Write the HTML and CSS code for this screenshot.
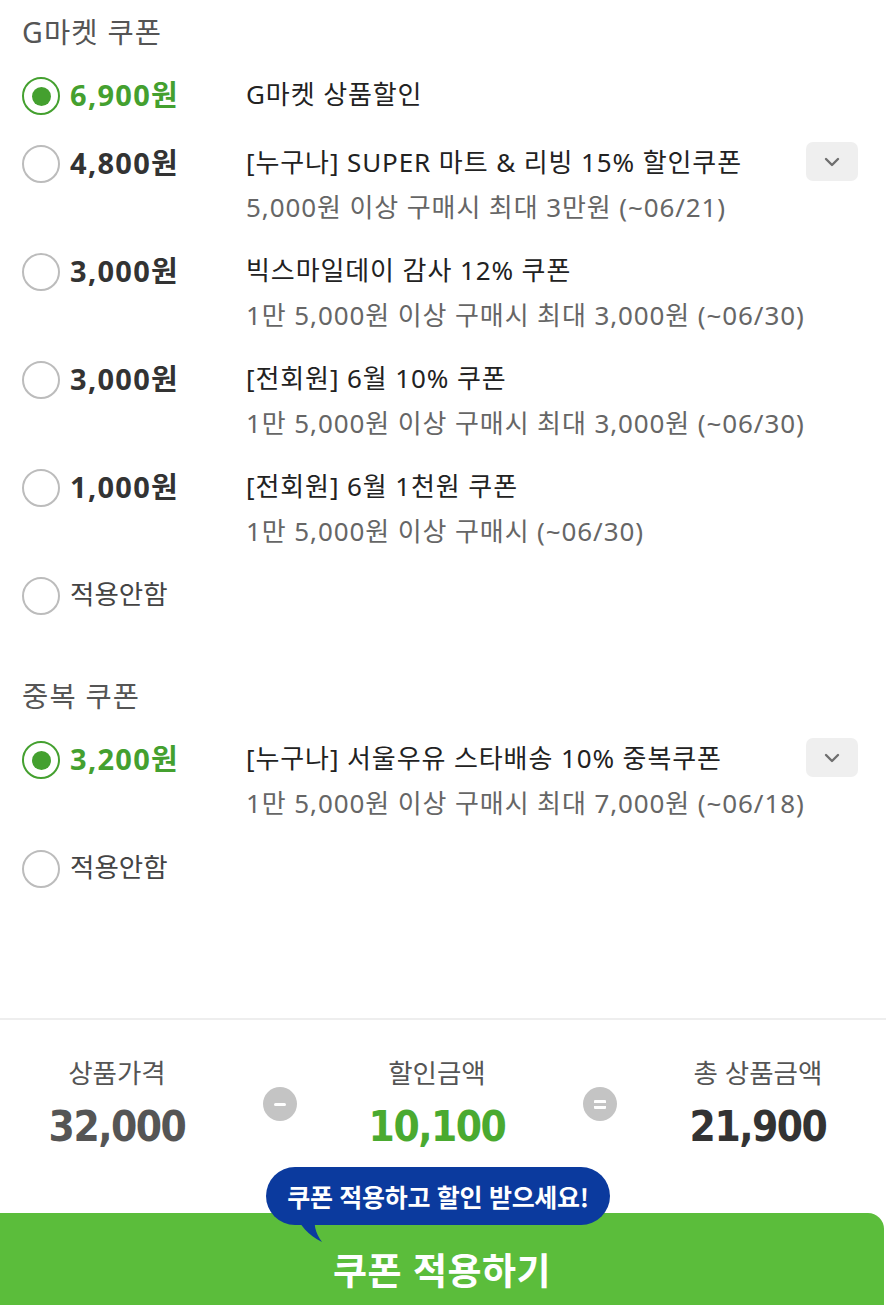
FILE: index.html
```html
<!DOCTYPE html>
<html lang="ko">
<head>
<meta charset="utf-8">
<link rel="stylesheet" href="styles.css">
</head>
<body>
<div class="page">
  <section class="section">
    <h2 class="sec-title">G마켓 쿠폰</h2>
    <div class="row first">
      <span class="radio on"></span>
      <span class="amount green">6,900원</span>
      <div class="info"><div class="title">G마켓 상품할인</div></div>
    </div>
    <div class="row">
      <span class="radio"></span>
      <span class="amount">4,800원</span>
      <div class="info"><div class="title">[누구나] SUPER 마트 &amp; 리빙 15% 할인쿠폰</div><div class="sub">5,000원 이상 구매시 최대 3만원 (~06/21)</div></div>
      <button class="more"><svg width="16" height="10" viewBox="0 0 16 10"><path d="M2 2l6 6 6-6" fill="none" stroke="#6f6f6f" stroke-width="2.4" stroke-linecap="round" stroke-linejoin="round"/></svg></button>
    </div>
    <div class="row">
      <span class="radio"></span>
      <span class="amount">3,000원</span>
      <div class="info"><div class="title">빅스마일데이 감사 12% 쿠폰</div><div class="sub">1만 5,000원 이상 구매시 최대 3,000원 (~06/30)</div></div>
    </div>
    <div class="row">
      <span class="radio"></span>
      <span class="amount">3,000원</span>
      <div class="info"><div class="title">[전회원] 6월 10% 쿠폰</div><div class="sub">1만 5,000원 이상 구매시 최대 3,000원 (~06/30)</div></div>
    </div>
    <div class="row">
      <span class="radio"></span>
      <span class="amount">1,000원</span>
      <div class="info"><div class="title">[전회원] 6월 1천원 쿠폰</div><div class="sub">1만 5,000원 이상 구매시 (~06/30)</div></div>
    </div>
    <div class="row none">
      <span class="radio"></span>
      <span class="none-label">적용안함</span>
    </div>
  </section>

  <section class="section second">
    <h2 class="sec-title">중복 쿠폰</h2>
    <div class="row dup">
      <span class="radio on"></span>
      <span class="amount green">3,200원</span>
      <div class="info"><div class="title">[누구나] 서울우유 스타배송 10% 중복쿠폰</div><div class="sub">1만 5,000원 이상 구매시 최대 7,000원 (~06/18)</div></div>
      <button class="more"><svg width="16" height="10" viewBox="0 0 16 10"><path d="M2 2l6 6 6-6" fill="none" stroke="#6f6f6f" stroke-width="2.4" stroke-linecap="round" stroke-linejoin="round"/></svg></button>
    </div>
    <div class="row none">
      <span class="radio"></span>
      <span class="none-label">적용안함</span>
    </div>
  </section>

  <div class="summary">
    <div class="col">
      <div class="label">상품가격</div>
      <div class="value gray">32,000</div>
    </div>
    <div class="op"><span class="op-circle"><span class="minus"></span></span></div>
    <div class="col">
      <div class="label">할인금액</div>
      <div class="value green">10,100</div>
    </div>
    <div class="op"><span class="op-circle"><span class="eq"></span></span></div>
    <div class="col">
      <div class="label">총 상품금액</div>
      <div class="value dark">21,900</div>
    </div>
  </div>

  <div class="cta">
    <div class="tip">
      <span class="tip-text">쿠폰 적용하고 할인 받으세요!</span>
      <svg class="tip-tail" width="40" height="34" viewBox="0 0 40 34"><path d="M2 0 C8 12 16 22 30 29 C23 20 21 10 24 0 Z" fill="#0b3a9e"/></svg>
    </div>
    <button class="apply">쿠폰 적용하기</button>
  </div>
</div>
</body>
</html>
```

FILE: styles.css
```css
* { box-sizing: border-box; }
html, body { margin: 0; padding: 0; background: #fff; }
body {
  font-family: "Noto Sans", "Noto Sans CJK KR", sans-serif;
  color: #222;
  width: 886px;
  overflow: hidden;
}
.page {
  padding-top: 10px;
  display: flex;
  flex-direction: column;
}
.section {
  display: flex;
  flex-direction: column;
  gap: 18px;
  padding: 0 28px 0 22px;
}
.section.second { margin-top: 57px; }
.sec-title {
  margin: 0;
  font-size: 28.5px;
  line-height: 45px;
  font-weight: 400;
  color: #555;
  letter-spacing: 1.2px;
}
.row {
  display: grid;
  grid-template-columns: 48px 176px 1fr 52px;
  align-items: start;
}
.row.first { margin-top: -1px; padding-bottom: 5px; }
.row.dup { margin-top: -1px; margin-bottom: 1px; }
.row.none { grid-template-columns: 48px 1fr; }
.radio {
  width: 38px;
  height: 38px;
  margin-top: 5px;
  border-radius: 50%;
  border: 2px solid #bcbcbc;
  background: #fff;
  position: relative;
}
.radio.on { border: 2.5px solid #44a02f; }
.radio.on::after {
  content: "";
  position: absolute;
  left: 50%;
  top: 50%;
  width: 19px;
  height: 19px;
  margin: -9.5px 0 0 -9.5px;
  border-radius: 50%;
  background: #44a02f;
}
.amount {
  font-size: 29px;
  line-height: 45px;
  font-weight: 700;
  color: #333;
  letter-spacing: 1.3px;
}
.amount.green { color: #44a02f; }
.none-label {
  font-size: 26.5px;
  line-height: 45px;
  color: #444;
}
.info { min-width: 0; }
.title {
  font-size: 26px;
  line-height: 45px;
  color: #222;
  white-space: nowrap;
  letter-spacing: 0.9px;
}
.sub {
  font-size: 26px;
  line-height: 45px;
  color: #666;
  white-space: nowrap;
  letter-spacing: 0.9px;
}
.more {
  width: 52px;
  height: 39px;
  margin-top: 2px;
  border: none;
  border-radius: 7px;
  background: #efefef;
  display: flex;
  align-items: center;
  justify-content: center;
  padding: 0;
}
.summary {
  margin-top: 128px;
  border-top: 2px solid #eeeeee;
  padding-top: 33px;
  display: grid;
  grid-template-columns: 234px 92px 222px 104px 212px;
  align-items: start;
}
.col {
  display: flex;
  flex-direction: column;
  align-items: center;
  gap: 9px;
}
.label {
  font-size: 26.5px;
  line-height: 40px;
  color: #555;
}
.value {
  font-family: "DejaVu Sans Condensed", "DejaVu Sans", sans-serif;
  font-size: 42px;
  line-height: 50px;
  font-weight: 700;
  letter-spacing: -1.5px;
}
.value.gray { color: #555; }
.value.green { color: #4aaa30; }
.value.dark { color: #333; }
.op {
  display: flex;
  justify-content: center;
  padding-top: 34px;
}
.op-circle {
  width: 34px;
  height: 34px;
  border-radius: 50%;
  background: #c4c4c4;
  display: flex;
  flex-direction: column;
  align-items: center;
  justify-content: center;
}
.minus { width: 12px; height: 3px; background: #fff; border-radius: 2px; }
.eq { width: 12px; height: 9px; border-top: 3px solid #fff; border-bottom: 3px solid #fff; border-radius: 1px; }
.cta {
  margin-top: 61px;
  position: relative;
}
.apply {
  display: block;
  width: 884px;
  height: 92px;
  border: none;
  background: #5bbd3b;
  border-radius: 0 16px 0 0;
  color: #fff;
  font-family: "Noto Sans CJK KR", "Noto Sans", sans-serif;
  font-size: 37px;
  font-weight: 700;
  line-height: 50px;
  padding: 31px 0 11px;
  letter-spacing: 0.5px;
}
.tip {
  position: absolute;
  left: 266px;
  top: -46px;
  z-index: 2;
}
.tip-text {
  display: block;
  position: relative;
  z-index: 1;
  width: 344px;
  height: 58px;
  border-radius: 29px;
  background: #0b3a9e;
  color: #fff;
  font-family: "Noto Sans CJK KR", sans-serif;
  font-size: 25px;
  font-weight: 700;
  line-height: 58px;
  text-align: center;
  letter-spacing: -0.3px;
}
.tip-tail {
  position: absolute;
  left: 26px;
  top: 46px;
}
```
